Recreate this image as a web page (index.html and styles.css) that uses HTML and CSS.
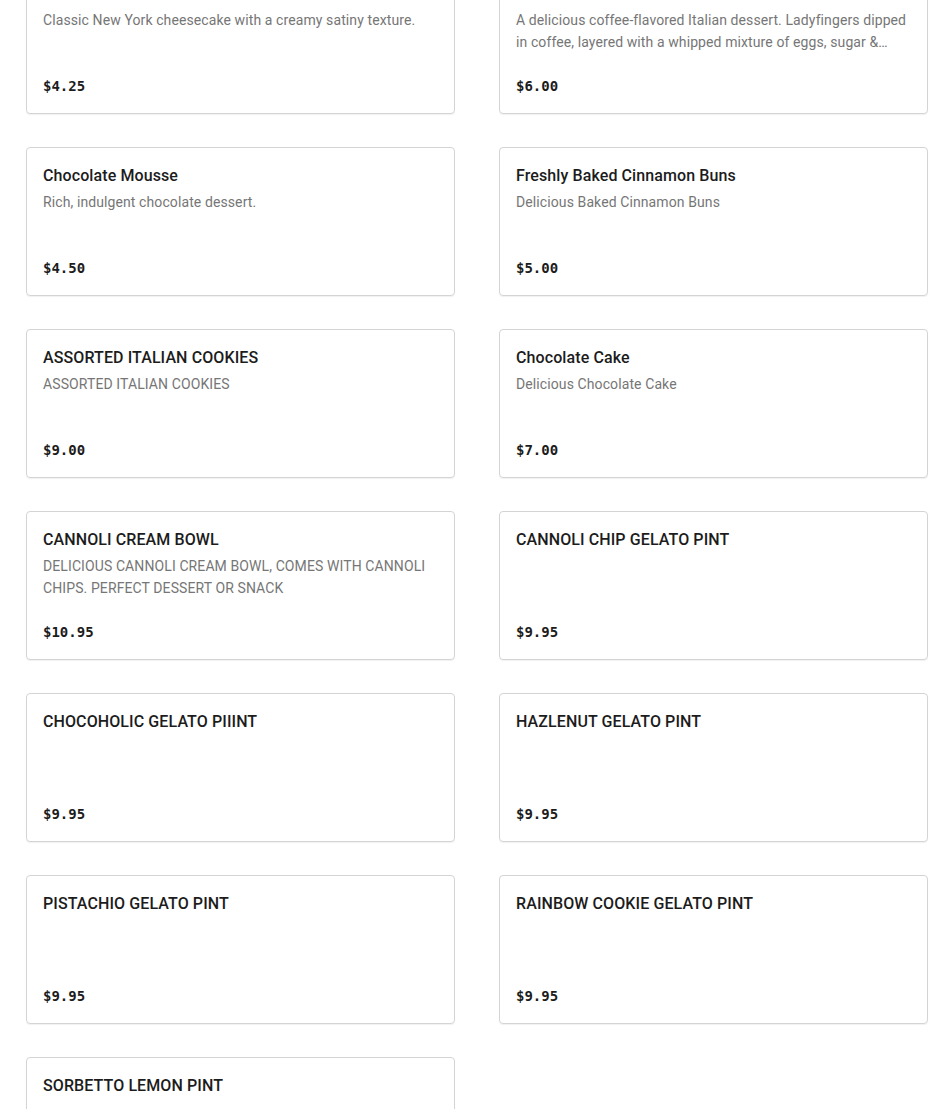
FILE: index.html
```html
<!DOCTYPE html>
<html lang="en">
	<head>
		<meta charset="UTF-8">
		<meta name="viewport" content="width=device-width, initial-scale=1.0">
		<title>Desserts</title>
		<link rel="stylesheet" href="styles.css">
	</head>
	<body>
		<ul class="menu">
			<li class="item">
				<h3 class="item-name">New York Cheesecake</h3>
				<p class="item-desc">Classic New York cheesecake with a creamy satiny texture.</p>
				<span class="item-price">$4.25</span>
			</li>
			<li class="item">
				<h3 class="item-name">Tiramisu</h3>
				<p class="item-desc">A delicious coffee-flavored Italian dessert. Ladyfingers dipped in coffee, layered with a whipped mixture of eggs, sugar &amp; mascarpone cheese, flavored with cocoa.</p>
				<span class="item-price">$6.00</span>
			</li>
			<li class="item">
				<h3 class="item-name">Chocolate Mousse</h3>
				<p class="item-desc">Rich, indulgent chocolate dessert.</p>
				<span class="item-price">$4.50</span>
			</li>
			<li class="item">
				<h3 class="item-name">Freshly Baked Cinnamon Buns</h3>
				<p class="item-desc">Delicious Baked Cinnamon Buns</p>
				<span class="item-price">$5.00</span>
			</li>
			<li class="item">
				<h3 class="item-name">ASSORTED ITALIAN COOKIES</h3>
				<p class="item-desc">ASSORTED ITALIAN COOKIES</p>
				<span class="item-price">$9.00</span>
			</li>
			<li class="item">
				<h3 class="item-name">Chocolate Cake</h3>
				<p class="item-desc">Delicious Chocolate Cake</p>
				<span class="item-price">$7.00</span>
			</li>
			<li class="item">
				<h3 class="item-name">CANNOLI CREAM BOWL</h3>
				<p class="item-desc">DELICIOUS CANNOLI CREAM BOWL, COMES WITH CANNOLI CHIPS. PERFECT DESSERT OR SNACK</p>
				<span class="item-price">$10.95</span>
			</li>
			<li class="item">
				<h3 class="item-name">CANNOLI CHIP GELATO PINT</h3>
				<p class="item-desc"></p>
				<span class="item-price">$9.95</span>
			</li>
			<li class="item">
				<h3 class="item-name">CHOCOHOLIC GELATO PIIINT</h3>
				<p class="item-desc"></p>
				<span class="item-price">$9.95</span>
			</li>
			<li class="item">
				<h3 class="item-name">HAZLENUT GELATO PINT</h3>
				<p class="item-desc"></p>
				<span class="item-price">$9.95</span>
			</li>
			<li class="item">
				<h3 class="item-name">PISTACHIO GELATO PINT</h3>
				<p class="item-desc"></p>
				<span class="item-price">$9.95</span>
			</li>
			<li class="item">
				<h3 class="item-name">RAINBOW COOKIE GELATO PINT</h3>
				<p class="item-desc"></p>
				<span class="item-price">$9.95</span>
			</li>
			<li class="item">
				<h3 class="item-name">SORBETTO LEMON PINT</h3>
				<p class="item-desc"></p>
				<span class="item-price">$9.95</span>
			</li>
		</ul>
	</body>
</html>
```

FILE: styles.css
```css
* {
	margin: 0;
	padding: 0;
	box-sizing: border-box;
}

body {
	background-color: #fff;
	font-family: "Roboto", "Liberation Sans", sans-serif;
	color: #1c1c1c;
}

.menu {
	list-style: none;
	display: grid;
	grid-template-columns: 429px 429px;
	column-gap: 44px;
	row-gap: 33px;
	margin-top: -35px;
	padding: 0 0 40px 26px;
}

.item {
	display: flex;
	flex-direction: column;
	height: 149px;
	padding: 16px 16px 17px;
	border: 1px solid #d4d4d4;
	border-radius: 4px;
	box-shadow: 0 1px 1px rgba(0, 0, 0, 0.06);
}

.item-name {
	font-size: 16px;
	line-height: 24px;
	font-weight: 500;
	letter-spacing: 0.1px;
	white-space: nowrap;
	overflow: hidden;
	text-overflow: ellipsis;
}

.item-desc {
	margin-top: 3px;
	height: 44px;
	font-size: 14px;
	line-height: 22px;
	letter-spacing: 0.1px;
	color: #767676;
	display: -webkit-box;
	-webkit-line-clamp: 2;
	-webkit-box-orient: vertical;
	overflow: hidden;
}

.item-price {
	margin-top: auto;
	font-family: "DejaVu Sans Mono", "Liberation Mono", monospace;
	font-size: 14px;
	line-height: 20px;
	font-weight: bold;
}
```
